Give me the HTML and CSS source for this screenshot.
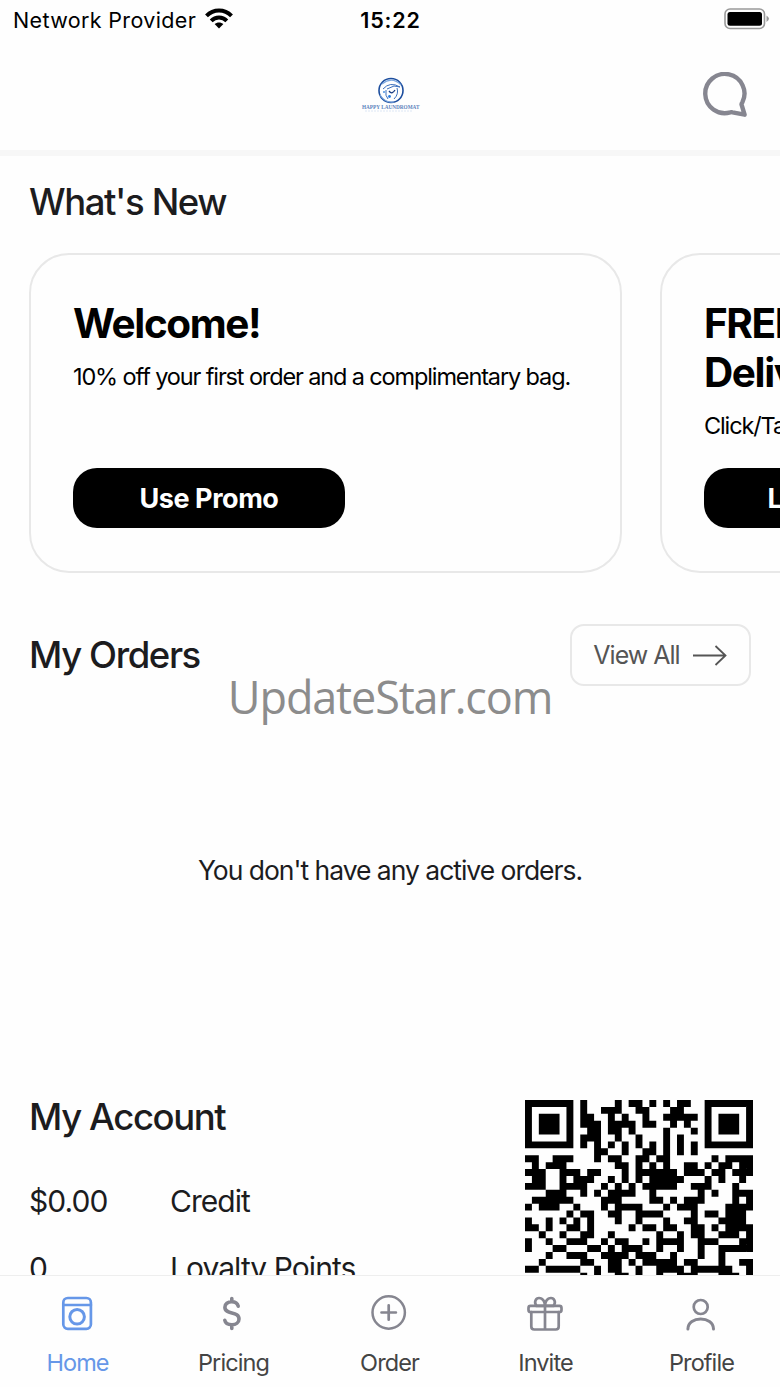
FILE: index.html
```html
<!DOCTYPE html>
<html lang="en">
<head>
<meta charset="utf-8">
<title>Happy Laundromat</title>
<link rel="stylesheet" href="styles.css">
</head>
<body>
<div class="status">
  <div class="status-left"><span class="carrier">Network Provider</span>
    <svg class="wifi" viewBox="0 0 28 21" width="28" height="21"><g fill="none" stroke="#000" stroke-width="4"><path d="M1.500 7.800C8.500 .7 19.500 .7 26.500 7.800"/><path d="M6.200 12.800C10.500 8.400 17.500 8.400 21.800 12.800"/></g><path d="M14 20.500L9.600 16.100C12 13.900 16 13.900 18.400 16.100Z"/></svg>
  </div>
  <span class="clock">15:22</span>
  <svg class="battery" viewBox="0 0 46 22" width="46" height="22"><rect x="1" y="1" width="39.500" height="19.500" rx="5" fill="none" stroke="#999" stroke-width="1.600"/><rect x="3.500" y="4" width="34.500" height="13.800" rx="2.500"/><path d="M42.500 7.500Q47.500 10.800 42.500 14Z" fill="#999"/></svg>
</div>
<header class="header">
  <svg class="logo" viewBox="0 0 60 36" width="60" height="36">
    <circle cx="30" cy="13.500" r="12" fill="none" stroke="#1d4e9e" stroke-width="1.600"/>
    <path d="M21 7Q31-1 40 8M19 18Q24 26 33 25" fill="none" stroke="#7ba7e0" stroke-width="1.200"/>
    <path d="M22 12Q29 4 39 10L33 9 26 12M25 13Q24 19 27 22M36 11Q38 17 33 22" fill="none" stroke="#3c70bd" stroke-width="1"/>
    <path d="M28 14Q31 18 34 13" fill="none" stroke="#173a80" stroke-width="1.300"/><circle cx="28.500" cy="19.500" r="1.400" fill="#2b7de0"/><circle cx="23" cy="15" r="1" fill="#4a90e0"/>
    <text x="1" y="31.500" textLength="57.500" lengthAdjust="spacingAndGlyphs" class="logo-name">HAPPY LAUNDROMAT</text>
    <path d="M4 34H52" stroke="#dbe6f4" stroke-width="1.200" stroke-dasharray="2 1"/>
  </svg>
  <svg class="chat" viewBox="0 0 46 46" width="46" height="46"><path d="M40.400 30.300A19.600 19.600 0 1 0 28.300 40.400Q29.300 40 30.500 40.300L42.600 42.700 39.500 32.300Q39.500 31.500 40.400 30.300Z" fill="none" stroke="#868690" stroke-width="4.400" stroke-linejoin="round"/></svg>
</header>
<main class="content">
  <h2 class="title news-title">What's New</h2>
  <div class="cards">
    <section class="card">
      <h3 class="card-title">Welcome!</h3>
      <p class="card-text">10% off your first order and a complimentary bag.</p>
      <button class="promo">Use Promo</button>
    </section>
    <section class="card">
      <h3 class="card-title">FREE<br>Delivery</h3>
      <p class="card-text">Click/Tap</p>
      <button class="promo">Learn more</button>
    </section>
  </div>
  <div class="orders-head">
    <h2 class="title">My Orders</h2>
    <button class="view-all"><span>View All</span><svg viewBox="0 0 36 24" width="36" height="24"><path d="M1 12.500H33M23.500 3L33.500 12.500 23.500 22" fill="none" stroke="#555" stroke-width="1.800"/></svg></button>
  </div>
  <p class="empty">You don't have any active orders.</p>
  <section class="account">
    <div>
      <h2 class="title">My Account</h2>
      <dl class="stats">
        <dt>$0.00</dt><dd>Credit</dd>
        <dt>0</dt><dd>Loyalty Points</dd>
      </dl>
    </div>
    <svg class="qr" viewBox="0 0 33 33" width="228" height="228"><path id="qr-modules" d=""/></svg>
  </section>
</main>
<nav class="tabs">
  <a class="tab active"><svg viewBox="0 0 40 40" width="40" height="40"><rect x="6.300" y="5" width="27.600" height="30.800" rx="4.500"/><path d="M6.300 12H33.900"/><circle cx="20.100" cy="23.800" r="7.300" stroke-width="3"/></svg><span>Home</span></a>
  <a class="tab"><svg viewBox="0 0 40 40" width="40" height="40"><path stroke-width="3.600" d="M25.200 13.200C24.500 10.200 21.900 8.800 18.700 8.800 14.900 8.800 11.900 10.800 11.900 14.200 11.900 22.500 26 17.500 26 26 26 29.500 22.900 31.700 19 31.700 15.200 31.700 12.300 30 11.800 27.200M18.800 5.500V8.500M18.800 32V35.500"/></svg><span>Pricing</span></a>
  <a class="tab"><svg viewBox="0 0 40 40" width="40" height="40"><circle cx="19.700" cy="19.500" r="16.200" stroke-width="2.500"/><path d="M12.500 19.500H26.900M19.700 12.300V26.700"/></svg><span>Order</span></a>
  <a class="tab"><svg viewBox="0 0 40 40" width="40" height="40"><rect x="3.500" y="12.900" width="33" height="6.100" rx="2"/><path d="M6.300 19V33.500Q6.300 36.500 9.300 36.500H30.700Q33.700 36.500 33.700 33.500V19M20 13V36.500M20 12.800H11.500C8.500 9 11 5 14 5 18 5 20 9 20 12.800ZM20 12.800H28.500C31.500 9 29 5 26 5 22 5 20 9 20 12.800Z"/></svg><span>Invite</span></a>
  <a class="tab"><svg viewBox="0 0 40 40" width="40" height="40"><circle cx="19.700" cy="14" r="7"/><path d="M6.900 36C6.900 22.500 32.500 22.500 32.500 36" stroke-width="3"/></svg><span>Profile</span></a>
</nav>
<div class="watermark">UpdateStar.com</div>
<script src="qr.js"></script>
</body>
</html>
```
FILE: styles.css
```css
* { box-sizing: border-box; margin: 0; padding: 0; }
body {
  width: 780px; height: 1387px; overflow: hidden; position: relative;
  display: flex; flex-direction: column; background: #fefefe; color: #1c1c1e;
  font-family: Inter, "Liberation Sans", sans-serif;
}
button { font-family: inherit; border: 0; }
.status { display: grid; grid-template-columns: 1fr auto 1fr; height: 40px; align-items: center; padding: 0 10px 0 13px; color: #000; font-size: 21.5px; }
.status-left { display: flex; align-items: center; gap: 9px; }
.carrier { letter-spacing: .35px; white-space: nowrap; }
.wifi { margin-top: -4px; }
.clock { font-weight: 600; letter-spacing: .8px; margin-left: -2px; }
.battery { justify-self: end; margin-top: -2px; }
.header { display: grid; grid-template-columns: 1fr auto 1fr; height: 116px; padding: 32px 31px 0; border-bottom: 6px solid #f7f7f7; }
.logo { grid-column: 2; margin: 5px -1px 0 1px; overflow: visible; }
.logo-name { font: bold 6px "Liberation Serif", serif; fill: #5d84bd; }
.chat { justify-self: end; margin-right: 1px; }
.content { flex: 1; min-height: 0; overflow: hidden; padding: 0 29px; }
.title { font-size: 36.5px; line-height: 46px; font-weight: 450; letter-spacing: -1.4px; }
.news-title { margin-top: 23px; }
.cards { display: flex; gap: 38px; margin-top: 28px; }
.card { flex: 0 0 593px; height: 320px; padding: 44px 42px 43px; border: 2px solid #e8e8e8; border-radius: 40px; display: flex; flex-direction: column; align-items: flex-start; color: #000; }
.card-title { font-size: 40.5px; line-height: 49px; font-weight: 700; letter-spacing: -1.4px; white-space: nowrap; }
.card-text { margin-top: 14px; font-size: 23.5px; line-height: 30px; letter-spacing: -1.13px; white-space: nowrap; }
.promo { margin-top: auto; width: 272px; height: 60px; border-radius: 24px; background: #000; color: #fff; font-size: 27px; font-weight: 700; letter-spacing: -.45px; }
.orders-head { display: flex; justify-content: space-between; align-items: center; margin-top: 51px; }
.view-all { display: flex; align-items: center; justify-content: center; gap: 12px; width: 181px; height: 62px; border: 2px solid #e8e8e8; border-radius: 14px; background: #fefefe; color: #555; font-size: 25px; letter-spacing: -1px; }
.empty { margin-top: 166px; text-align: center; font-size: 26.5px; line-height: 36px; letter-spacing: -1.02px; }
.account { display: flex; justify-content: space-between; margin-top: 206px; }
.qr { margin: 6px -2px 0 0; }
.stats { display: grid; grid-template-columns: 141px auto; row-gap: 27px; margin-top: 41px; font-size: 30px; line-height: 40px; letter-spacing: -.95px; }
.tabs { display: flex; height: 112px; border-top: 1px solid #eee; background: #fefefe; }
.tab { flex: 1; display: flex; flex-direction: column; align-items: center; padding: 17px 1px 0 0; gap: 14px; font-size: 23.5px; line-height: 32px; letter-spacing: -.9px; color: #444; }
.tab svg { fill: none; stroke: #868690; stroke-width: 2.7; stroke-linecap: round; margin-right: 1px; }
.tab.active { color: #6697e8; }
.tab.active svg { stroke: #6697e8; }
.watermark { position: absolute; left: 0; right: 0; top: 665px; text-align: center; font: 45px/64px "Open Sans", sans-serif; letter-spacing: -1.15px; color: #8c8c8c; }
```
FILE: qr.js
```js
// Column indexes of the dark modules, one entry per row.
const rows = [
  [0,1,2,3,4,5,6,8,13,15,16,18,20,22,23,26,27,28,29,30,31,32],
  [0,6,8,11,12,13,16,17,21,22,26,32],
  [0,2,3,4,6,8,9,12,14,17,20,21,22,23,24,26,28,29,30,32],
  [0,2,3,4,6,8,9,10,12,13,14,15,17,18,21,23,26,28,29,30,32],
  [0,2,3,4,6,9,10,12,13,15,20,24,26,28,29,30,32],
  [0,6,8,9,10,13,16,20,22,26,32],
  [0,1,2,3,4,5,6,8,10,12,14,16,18,20,22,24,26,27,28,29,30,31,32],
  [10,11,14,17,18,20,22,24],
  [0,1,4,5,6,10,12,13,16,17,19,20,27,29,30,31,32],
  [1,3,4,5,13,14,16,18,20,23,24,26,28,29,31,32],
  [0,1,2,5,6,7,9,10,14,16,17,18,19,20,21,23,24,25,27,28,30,31,32],
  [1,2,5,7,8,9,12,14,16,18,19,20,21,22,26,28,31],
  [0,1,2,5,6,7,8,11,13,15,17,18,19,20,21,24,25,26,30],
  [3,4,5,8,10,12,13,14,15,18,25,27,30,31,32],
  [1,2,3,4,5,6,11,12,13,18,19,21,23,24,25,30,32],
  [0,2,3,4,7,11,13,14,15,16,20,22,23,24,29,30,31,32],
  [6,8,9,12,13,16,17,18,19,24,26,27,29,30,31],
  [0,3,5,7,9,13,16,20,23,24,28,29,30,31],
  [0,1,3,6,7,9,15,17,18,20,21,24,25,27,29,30,31,32],
  [2,5,8,9,12,19,22,24,25,28,29,30,32],
  [0,3,6,7,8,11,13,14,17,19,20,21,22,25,26,27,31,32],
  [0,4,5,9,10,12,14,15,16,19,22,25,28,29,30,31,32],
  [3,6,7,8,11,12,13,14,16,17,18,21,25,28],
  [2,8,9,12,13,15,17,18,19,20,21,23,24,28,31,32],
  [0,1,3,4,5,6,7,10,12,13,16,19,20,21,22,24,25,26,27,28,29,32],
  [8,10,13,14,16,19,22,23,24,28,29,30,32]
];
document.getElementById('qr-modules').setAttribute('d',
  rows.map((cols, y) => cols.map(x => `M${x} ${y}h1v1h-1z`).join('')).join(''));
```
